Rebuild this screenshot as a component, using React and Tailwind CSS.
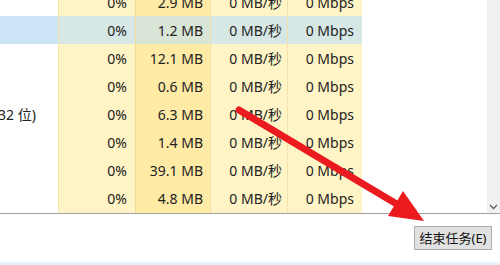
import React from "react";

const rows = [
  { name: "", cpu: "0%", mem: "2.9 MB", disk: "0 MB/秒", net: "0 Mbps" },
  { name: "", cpu: "0%", mem: "1.2 MB", disk: "0 MB/秒", net: "0 Mbps", selected: true },
  { name: "", cpu: "0%", mem: "12.1 MB", disk: "0 MB/秒", net: "0 Mbps" },
  { name: "", cpu: "0%", mem: "0.6 MB", disk: "0 MB/秒", net: "0 Mbps" },
  { name: "32 位)", cpu: "0%", mem: "6.3 MB", disk: "0 MB/秒", net: "0 Mbps" },
  { name: "", cpu: "0%", mem: "1.4 MB", disk: "0 MB/秒", net: "0 Mbps" },
  { name: "", cpu: "0%", mem: "39.1 MB", disk: "0 MB/秒", net: "0 Mbps" },
  { name: "", cpu: "0%", mem: "4.8 MB", disk: "0 MB/秒", net: "0 Mbps" },
];

function Row({ row }) {
  const sel = row.selected;
  return (
    <div className="flex h-[29px] items-center">
      <div className={`w-[58px] h-full flex items-center ${sel ? "bg-[#cde6f7]" : "bg-white"}`}>
        <span className="-ml-[2px] whitespace-nowrap">{row.name}</span>
      </div>
      <div className={`w-[77px] h-full flex items-center justify-end pr-[8px] border-l border-[#f1e2ad] ${sel ? "bg-[#d6e7e6]" : "bg-[#fff4c6]"}`}>
        {row.cpu}
      </div>
      <div className={`w-[75px] h-full flex items-center justify-end pr-[7px] border-l border-[#f1dc98] ${sel ? "bg-[#d9e5d6]" : "bg-[#ffeaa6]"}`}>
        {row.mem}
      </div>
      <div className={`w-[77px] h-full flex items-center justify-end pr-[5px] border-l border-[#f1e2ad] ${sel ? "bg-[#d6e7e6]" : "bg-[#fff4c6]"}`}>
        {row.disk}
      </div>
      <div className={`w-[75px] h-full flex items-center justify-end pr-[8px] border-l border-[#f1e2ad] ${sel ? "bg-[#d6e7e6]" : "bg-[#fff4c6]"}`}>
        {row.net}
      </div>
      <div className="flex-1 h-full bg-white" />
    </div>
  );
}

export default function App() {
  return (
    <div
      className="relative w-[500px] h-[265px] overflow-hidden bg-white text-[14px] text-[#222] flex flex-col"
      style={{ fontFamily: '"Noto Sans", "Noto Sans CJK SC", sans-serif' }}
    >
      <div className="h-[213px] flex overflow-hidden">
        <div className="flex-1 flex flex-col -mt-[12px]">
          {rows.map((r, i) => (
            <Row key={i} row={r} />
          ))}
        </div>
        <div className="w-[13px] bg-[#f0f0f0] flex flex-col justify-end items-center pb-[3px]">
          <svg width="9" height="6" viewBox="0 0 9 6">
            <path d="M1 1 L4.5 4.5 L8 1" fill="none" stroke="#606060" strokeWidth="1.3" />
          </svg>
        </div>
      </div>
      <div className="h-px bg-[#a0a0a0]" />
      <div className="flex-1 flex justify-end items-start pt-[12px] pr-[8px]">
        <button className="w-[78px] h-[24px] bg-[#e1e1e1] border border-[#adadad] text-[13px] text-[#111] leading-none">
          结束任务(E)
        </button>
      </div>
      <div className="h-[3px] bg-[#e9f1f9]" />

      <svg className="absolute inset-0 pointer-events-none" width="500" height="265" viewBox="0 0 500 265">
        <line x1="239" y1="110" x2="400" y2="206" stroke="#ea1a1f" strokeWidth="7" strokeLinecap="round" />
        <polygon points="424,221 388,216 403,191" fill="#ea1a1f" />
      </svg>
    </div>
  );
}
